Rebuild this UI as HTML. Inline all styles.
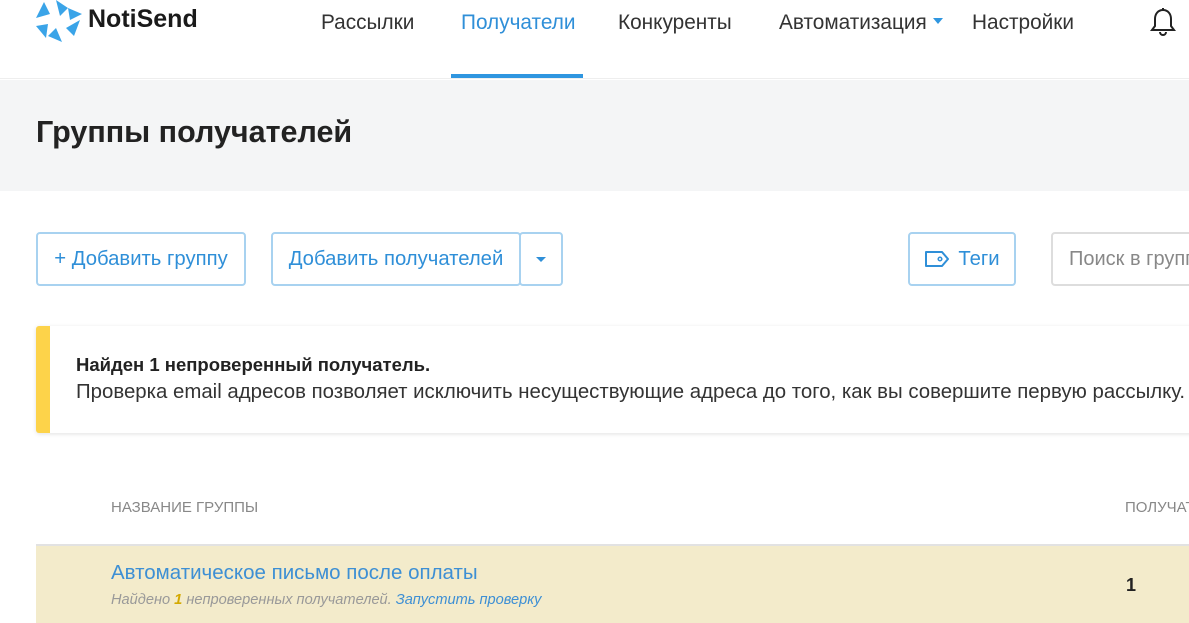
<!DOCTYPE html>
<html><head><meta charset="utf-8"><style>
*{box-sizing:border-box;margin:0;padding:0}
body{width:1189px;height:623px;overflow:hidden;background:#fff;font-family:"Liberation Sans","DejaVu Sans",sans-serif;position:relative}
.abs{position:absolute}
.nav{font-size:20.8px;color:#333;top:11px}
.btn{position:absolute;border:2px solid #a8d2f0;border-radius:4px;color:#2f8fd8;font-size:20.3px;display:flex;align-items:center;justify-content:center;background:#fff}
</style></head><body>
<div class="abs" style="left:0;top:0;width:1189px;height:79px;background:#fff;border-bottom:1px solid #eee"></div>
<svg class="abs" style="left:36px;top:0" width="46" height="42" viewBox="0 0 46 42">
<g fill="#3aa4e8">
<polygon points="20,0 32,8 24,16"/><polygon points="32,8 46,14 34,20"/><polygon points="44,20 38,36 30,28"/>
<polygon points="26,42 12,36 20,28"/><polygon points="10,38 0,26 12,24"/><polygon points="0,18 8,2 14,14"/>
</g></svg>
<div class="abs" style="left:88px;top:5px;font-size:25px;font-weight:bold;color:#1a1a1a">NotiSend</div>
<div class="abs nav" style="left:321px">Рассылки</div>
<div class="abs nav" style="left:461px;color:#2f8fd8">Получатели</div>
<div class="abs" style="left:451px;top:74px;width:132px;height:4px;background:#2f96e0"></div>
<div class="abs nav" style="left:618px">Конкуренты</div>
<div class="abs nav" style="left:779px">Автоматизация</div>
<div class="abs" style="left:933px;top:18px;width:0;height:0;border-left:5px solid transparent;border-right:5px solid transparent;border-top:6px solid #2f96e0"></div>
<div class="abs nav" style="left:972px">Настройки</div>
<svg class="abs" style="left:1150px;top:7px" width="26" height="30" viewBox="0 0 26 30"><path d="M13 3c-5 0-8 4-8 9v7l-3 4h22l-3-4v-7c0-5-3-9-8-9zM10 25a3 3 0 006 0M13 1v2" fill="none" stroke="#222" stroke-width="2"/></svg>
<div class="abs" style="left:0;top:80px;width:1189px;height:111px;background:#f4f5f6"></div>
<div class="abs" style="left:36px;top:115px;font-size:30.5px;font-weight:bold;color:#222">Группы получателей</div>
<div class="btn" style="left:36px;top:232px;width:210px;height:54px">+ Добавить группу</div>
<div class="btn" style="left:271px;top:232px;width:250px;height:54px">Добавить получателей</div>
<div class="btn" style="left:519px;top:232px;width:44px;height:54px"><div style="border-left:5px solid transparent;border-right:5px solid transparent;border-top:5px solid #2f8fd8"></div></div>
<div class="btn" style="left:908px;top:232px;width:108px;height:54px"><svg width="26" height="18" viewBox="0 0 26 18" style="margin-right:8px"><path d="M2 2h16l6 7-6 7H2z" fill="none" stroke="#2f8fd8" stroke-width="2" stroke-linejoin="round"/><circle cx="16" cy="9" r="1.8" fill="none" stroke="#2f8fd8" stroke-width="1.5"/></svg>Теги</div>
<div class="abs" style="left:1051px;top:232px;width:150px;height:54px;border:2px solid #ddd;border-radius:4px;font-size:20px;color:#888;padding:14px 0 0 16px;white-space:nowrap;overflow:hidden">Поиск в группах</div>
<div class="abs" style="left:36px;top:326px;width:1160px;height:107px;background:#fff;box-shadow:0 1px 4px rgba(0,0,0,.12);border-left:14px solid #fdd34a;border-radius:3px"></div>
<div class="abs" style="left:76px;top:354px;font-size:18.5px;font-weight:bold;color:#222">Найден 1 непроверенный получатель.</div>
<div class="abs" style="left:76px;top:381px;font-size:20.4px;color:#333;white-space:nowrap">Проверка email адресов позволяет исключить несуществующие адреса до того, как вы совершите первую рассылку.</div>
<div class="abs" style="left:111px;top:499px;font-size:15px;color:#888">НАЗВАНИЕ ГРУППЫ</div>
<div class="abs" style="left:1125px;top:499px;font-size:15px;color:#888;white-space:nowrap">ПОЛУЧАТЕЛИ</div>
<div class="abs" style="left:36px;top:544px;width:1160px;height:79px;background:#f3ebcb;border-top:2px solid #e2e2e2"></div>
<div class="abs" style="left:111px;top:561px;font-size:20.5px;color:#3d8fd4">Автоматическое письмо после оплаты</div>
<div class="abs" style="left:111px;top:592px;font-size:14.6px;color:#999;font-style:italic">Найдено <b style="color:#d4a900">1</b> непроверенных получателей. <span style="color:#3d8fd4">Запустить проверку</span></div>
<div class="abs" style="left:1126px;top:575px;font-size:18px;font-weight:bold;color:#222">1</div>
</body></html>
